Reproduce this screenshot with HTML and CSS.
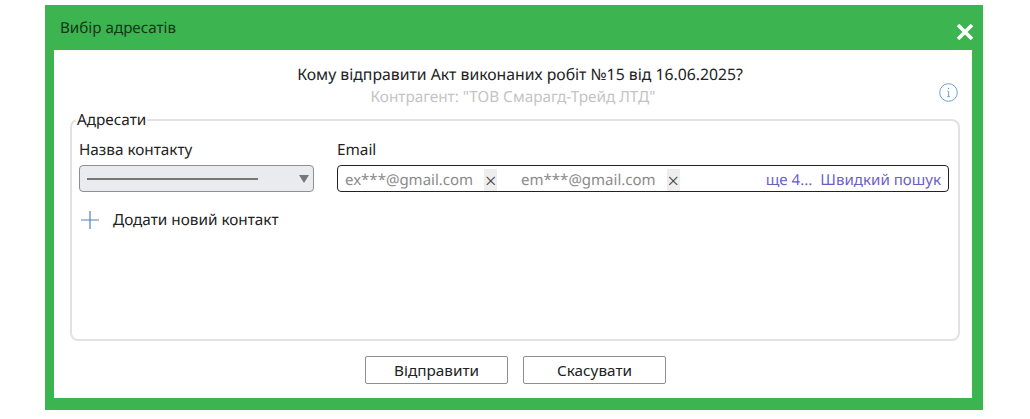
FILE: index.html
```html
<!DOCTYPE html>
<html lang="uk">
<head>
    <meta charset="UTF-8">
    <title>Вибір адресатів</title>
    <link rel="stylesheet" href="styles.css">
</head>
<body>

<div class="dialog">
    <div class="dialog-header">
        <span class="dialog-title">Вибір адресатів</span>
        <svg class="close-icon" width="18" height="18" viewBox="0 0 18 18">
            <path d="M2 2L16 16M16 2L2 16" stroke="#fff" stroke-width="3.6" fill="none"/>
        </svg>
    </div>
    <div class="dialog-body">
        <div class="intro">
            <p class="question">Кому відправити Акт виконаних робіт №15 від 16.06.2025?</p>
            <p class="counterparty">Контрагент: "ТОВ Смарагд-Трейд ЛТД"</p>
            <svg class="info-icon" width="19" height="19" viewBox="0 0 19 19">
                <circle cx="9.5" cy="9.5" r="8.8" stroke="#5b9bc9" stroke-width="0.9" fill="none"/>
                <circle cx="9.5" cy="5.4" r="0.7" fill="#5b9bc9"/>
                <path d="M8.4 8.2H9.6V13.6M8.2 13.7H11" stroke="#5b9bc9" stroke-width="0.9" fill="none"/>
            </svg>
        </div>
        <fieldset class="recipients">
            <legend>Адресати</legend>
            <div class="fields">
                <div class="field field-contact">
                    <label>Назва контакту</label>
                    <div class="select">
                        <span class="select-line"></span>
                        <span class="select-arrow"></span>
                    </div>
                </div>
                <div class="field field-email">
                    <label>Email</label>
                    <div class="email-input">
                        <span class="tag">ex***@gmail.com<span class="tag-remove">×</span></span>
                        <span class="tag">em***@gmail.com<span class="tag-remove">×</span></span>
                        <span class="more">ще 4...</span>
                        <span class="search">Швидкий пошук</span>
                    </div>
                </div>
            </div>
            <div class="add-contact">
                <svg width="20" height="20" viewBox="0 0 20 20">
                    <path d="M10 1V19M1 10H19" stroke="#4f86b5" stroke-width="1.2" fill="none"/>
                </svg>
                <span>Додати новий контакт</span>
            </div>
        </fieldset>
        <div class="actions">
            <button>Відправити</button>
            <button>Скасувати</button>
        </div>
    </div>
</div>

</body>
</html>
```

FILE: styles.css
```css
body {
    margin: 0;
    background-color: #fff;
    font-family: "Noto Sans", "Open Sans", sans-serif;
    font-size: 15.3px;
    text-rendering: geometricPrecision;
    color: #222;
}
.dialog {
    width: 938px;
    height: 405px;
    margin: 5px 0 0 45px;
    background-color: #3cb44f;
    display: flex;
    flex-direction: column;
}
.dialog-header {
    height: 45px;
    display: flex;
    align-items: center;
    justify-content: space-between;
    padding: 0 9px 0 15px;
    flex-shrink: 0;
}
.dialog-title {
    color: #14361c;
    font-size: 15.2px;
    margin-top: 1px;
}
.close-icon {
    margin-top: 9px;
}
.dialog-body {
    height: 348px;
    margin: 0 11px 0 9px;
    background-color: #fff;
    padding: 0 12px 0 16px;
    display: flex;
    flex-direction: column;
}
.intro {
    position: relative;
    height: 62px;
    padding-top: 14px;
    box-sizing: border-box;
    text-align: center;
}
.intro p {
    margin: 0;
    line-height: 20px;
}
.intro .question {
    padding-left: 10px;
    font-size: 15.77px;
    color: #222;
}
.intro .counterparty {
    margin-top: 3px;
    padding-right: 4px;
    color: #c4c4c4;
}
.info-icon {
    position: absolute;
    right: 2px;
    top: 33px;
}
.recipients {
    height: 231px;
    margin: 0;
    padding: 0 9px 0 7px;
    box-sizing: border-box;
    border: 2px solid #e2e2e2;
    border-radius: 8px;
    margin-top: -2px;
    min-width: 0;
}
.recipients legend {
    padding: 2px 1px 0;
    margin-left: -3px;
    line-height: 17px;
}
.fields {
    display: flex;
    gap: 23px;
    margin-top: 11px;
}
.field label {
    display: block;
    line-height: 20px;
    margin-bottom: 5px;
}
.field-contact {
    width: 235px;
    flex-shrink: 0;
}
.field-email {
    flex: 1;
    min-width: 0;
}
.select {
    height: 27px;
    box-sizing: border-box;
    background-color: #e9ebee;
    border: 1px solid #8f8f8f;
    border-radius: 4px;
    display: flex;
    align-items: center;
    justify-content: space-between;
    padding: 0 4px 0 7px;
}
.select-line {
    width: 171px;
    height: 2px;
    background-color: #777;
}
.select-arrow {
    width: 0;
    height: 0;
    border-left: 5px solid transparent;
    border-right: 5px solid transparent;
    border-top: 8px solid #777;
}
.email-input {
    height: 27px;
    box-sizing: border-box;
    border: 1px solid #222;
    border-radius: 4px;
    display: flex;
    align-items: center;
    padding: 2px 7px 0 7px;
    white-space: nowrap;
}
.tag {
    display: flex;
    align-items: center;
    font-size: 15px;
    color: #8a8a8a;
    margin-right: 24px;
}
.tag-remove {
    width: 13px;
    height: 22px;
    margin-left: 11px;
    background-color: #eeeeee;
    color: #444;
    font-size: 20px;
    font-weight: 300;
    line-height: 23px;
    text-align: center;
}
.more {
    margin-left: auto;
    font-size: 15.1px;
    color: #6a5fc9;
}
.search {
    margin-left: 8px;
    font-size: 15.1px;
    color: #6a5fc9;
}
.add-contact {
    display: flex;
    align-items: center;
    gap: 13px;
    margin-top: 18px;
    padding-left: 1px;
}
.actions {
    display: flex;
    justify-content: center;
    gap: 15px;
    margin-top: 15px;
    padding-left: 1px;
}
button {
    width: 143px;
    height: 28px;
    background-color: #fff;
    border: 1px solid #8f8f8f;
    border-radius: 2px;
    font-family: inherit;
    font-size: 15.3px;
    color: #222;
    padding: 0;
}
```
